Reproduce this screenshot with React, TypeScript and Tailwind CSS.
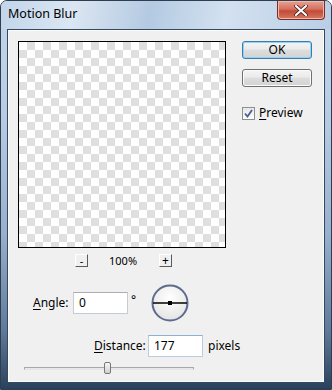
import React from 'react';

const font = { fontFamily: '"Noto Sans", "Open Sans", sans-serif' };

function Button({ label, primary }: { label: string; primary?: boolean }) {
  return (
    <div
      className={
        'flex h-[18px] w-[70px] items-center justify-center rounded-[3px] border bg-[linear-gradient(#f4f4f4_0%,#ebebeb_45%,#dddddd_50%,#d3d3d3_100%)] text-[12px] leading-none text-black ' +
        (primary
          ? 'border-[#3d7bad] shadow-[inset_0_0_0_1px_#8fd3f7]'
          : 'border-[#707070] shadow-[inset_0_0_0_1px_#fcfcfc]')
      }
    >
      {label}
    </div>
  );
}

function Dial() {
  return (
    <svg width="38" height="38" viewBox="0 0 38 38">
      <defs>
        <radialGradient id="dialfill" cx="0.5" cy="0.35" r="0.7">
          <stop offset="0" stopColor="#ffffff" />
          <stop offset="1" stopColor="#e2e2e4" />
        </radialGradient>
      </defs>
      <circle cx="19" cy="19" r="17.5" fill="url(#dialfill)" stroke="#5b6c8c" strokeWidth="2" />
      <line x1="2" y1="19" x2="36" y2="19" stroke="#000" strokeWidth="1.3" />
      <rect x="17" y="17" width="4" height="4" fill="#000" />
    </svg>
  );
}

export default function App() {
  return (
    <div
      className="flex h-[390px] w-[332px] flex-col overflow-hidden rounded-t-[7px] border border-[#2f3d4e] bg-[linear-gradient(#c3d6ea_0%,#b7cce4_30%,#97b0cd_60%,#5f7a99_85%,#2a415c_100%)] text-[12px] text-black"
      style={font}
    >
      {/* title bar */}
      <div className="relative flex h-[28px] shrink-0 items-start justify-between bg-[linear-gradient(100deg,#c2d5ea_0%,#dbe6f2_22%,#b4cae2_45%,#d3e1f0_68%,#b9cee6_100%)] pl-[7px] pr-[6px]">
        <span className="mt-[7px] text-[12.5px] leading-none text-black">Motion Blur</span>
        <div className="flex h-[19px] w-[48px] items-center justify-center rounded-b-[4px] border border-t-0 border-[#7a2b24] bg-[linear-gradient(#e8a193_0%,#d6705f_45%,#c24a36_55%,#d37a62_100%)] shadow-[inset_0_0_0_1px_#f0b9ad]">
          <svg width="14" height="11" viewBox="0 0 14 11">
            <path d="M2 1 L12 10 M12 1 L2 10" stroke="#3b1410" strokeWidth="3.6" strokeLinecap="round" />
            <path d="M2 1 L12 10 M12 1 L2 10" stroke="#ffffff" strokeWidth="2.2" strokeLinecap="round" />
          </svg>
        </div>
      </div>

      {/* client area */}
      <div className="flex flex-1 px-[6px] pb-[6px]">
        <div className="flex flex-1 border border-[#34485f] bg-[#f0f0f0] shadow-[inset_0_0_0_1px_#fbfbfb]">
          {/* left column */}
          <div className="flex w-[218px] shrink-0 flex-col pl-[10px] pt-[11px]">
            <div className="h-[207px] w-[208px] border border-black bg-[repeating-conic-gradient(#dfdfdf_0_25%,#ffffff_0_50%)] bg-[length:16px_16px]" />

            <div className="mt-[6px] flex h-[13px] items-center">
              <div className="ml-[57px] flex h-[13px] w-[13px] items-center justify-center border-b border-r border-l border-t border-b-[#5a5a5a] border-r-[#5a5a5a] border-l-white border-t-white text-[11px] leading-none">
                -
              </div>
              <span className="ml-[21px] text-[11px] leading-none">100%</span>
              <div className="ml-[22px] flex h-[13px] w-[13px] items-center justify-center border-b border-r border-l border-t border-b-[#5a5a5a] border-r-[#5a5a5a] border-l-white border-t-white text-[12px] leading-none">
                +
              </div>
            </div>

            <div className="mt-[17px] flex h-[38px] items-center">
              <span className="ml-[15px] w-[40px] shrink-0">
                <span className="underline underline-offset-2">A</span>ngle:
              </span>
              <div className="flex h-[22px] w-[55px] shrink-0 items-center border border-[#c5cbd3] border-t-[#abadb3] bg-white pl-[5px]">0</div>
              <span className="ml-[3px] -mt-[6px] self-center text-[12px]">°</span>
              <div className="ml-[15px] shrink-0">
                <Dial />
              </div>
            </div>

            <div className="mt-[13px] flex h-[22px] items-center whitespace-nowrap">
              <span className="ml-[76px] w-[54px] shrink-0">
                <span className="underline underline-offset-2">D</span>istance:
              </span>
              <div className="flex h-[22px] w-[55px] shrink-0 items-center border border-[#b6cde3] border-t-[#8eb1d3] bg-white pl-[5px]">177</div>
              <span className="ml-[5px] shrink-0">pixels</span>
            </div>

            <div className="relative ml-[6px] mt-[5px] flex h-[12px] w-[170px] items-center">
              <div className="h-[3px] w-full border border-[#a8a8a8] border-b-[#e6e6e6] bg-[#e8e8e8]" />
              <div className="absolute left-[80px] top-0 h-[12px] w-[7px] rounded-[2px] border border-[#777] bg-[linear-gradient(#f6f6f6,#d0d0d0)]" />
            </div>
          </div>

          {/* right column */}
          <div className="ml-[16px] flex flex-col pt-[11px]">
            <Button label="OK" primary />
            <div className="mt-[10px]">
              <Button label="Reset" />
            </div>
            <div className="mt-[17px] flex items-center">
              <div className="flex h-[13px] w-[13px] items-center justify-center border border-[#8e8f8f] bg-[linear-gradient(#e6e6e6,#ffffff)]">
                <svg width="9" height="9" viewBox="0 0 9 9">
                  <path d="M1 4.5 L3.5 7.5 L8 1" fill="none" stroke="#4a5f97" strokeWidth="1.8" />
                </svg>
              </div>
              <span className="ml-[4px]">
                <span className="underline underline-offset-2">P</span>review
              </span>
            </div>
          </div>
        </div>
      </div>
    </div>
  );
}
